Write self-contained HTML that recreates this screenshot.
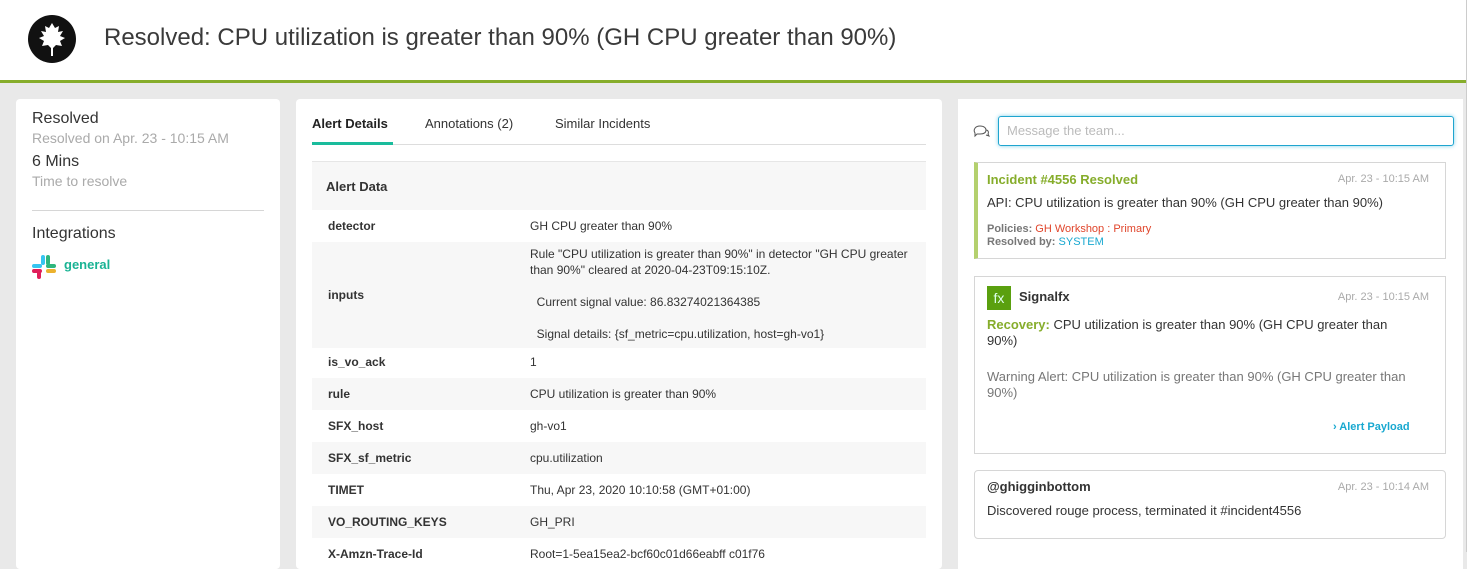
<!DOCTYPE html>
<html><head><meta charset="utf-8"><style>
*{box-sizing:border-box;margin:0;padding:0}
body{width:1467px;height:552px;overflow:hidden;background:#e9e9e9;font-family:"Liberation Sans",sans-serif;color:#333;position:relative}
.hdr{position:absolute;left:0;top:0;width:1467px;height:83px;background:#fff;border-bottom:3px solid #86ad2b}
.logo{position:absolute;left:28px;top:15px;width:48px;height:48px;border-radius:50%;background:#111}
.title{position:absolute;left:104px;top:24px;font-size:24px;color:#3a3a3a}
.panel{position:absolute;background:#fff;border-radius:4px}
.l{left:16px;top:99px;width:264px;height:470px}
.m{left:296px;top:99px;width:646px;height:470px}
.r{left:958px;top:99px;width:505px;height:470px;border-radius:0}
.abs{position:absolute;white-space:nowrap}
.row{position:absolute;left:312px;width:614px;font-size:12px;color:#333}
.row b{position:absolute;left:16px;font-weight:bold;color:#333}
.row span{position:absolute;left:218px}
.g{background:#f7f7f7}
.card{position:absolute;left:974px;width:472px;border:1px solid #d6d6d6;background:#fff}
.ts{position:absolute;right:16px;font-size:11px;color:#aaa}
</style></head><body>
<div class="hdr">
<div class="logo"><svg width="48" height="48" viewBox="0 0 48 48"><path d="M24 8 L27 13 L31 11 L30 17 L35 16 L32 21 L37 23 L32 26 L34 31 L28 30 L25 33 L25 41 L23 41 L23 33 L20 30 L14 31 L16 26 L11 23 L16 21 L13 16 L18 17 L17 11 L21 13 Z" fill="#fff"/></svg></div>
<div class="title">Resolved: CPU utilization is greater than 90% (GH CPU greater than 90%)</div>
</div>
<div style="position:absolute;right:0;top:0;width:1px;height:552px;background:#ccc"></div>

<div class="panel l"></div>
<div class="abs" style="left:32px;top:110px;font-size:16px;color:#333">Resolved</div>
<div class="abs" style="left:32px;top:130px;font-size:14px;color:#aaa">Resolved on Apr. 23 - 10:15 AM</div>
<div class="abs" style="left:32px;top:153px;font-size:16px;color:#333">6 Mins</div>
<div class="abs" style="left:32px;top:173px;font-size:14px;color:#aaa">Time to resolve</div>
<div class="abs" style="left:32px;top:210px;width:232px;height:1px;background:#d6d6d6"></div>
<div class="abs" style="left:32px;top:225px;font-size:16px;color:#333">Integrations</div>
<svg class="abs" style="left:32px;top:255px" width="24" height="24" viewBox="0 0 24 24"><rect x="9" y="0" width="4" height="10" rx="2" fill="#36c5f0"/><rect x="0" y="9" width="10" height="4" rx="2" fill="#36c5f0"/><rect x="14" y="0" width="4" height="10" rx="2" fill="#2eb67d"/><rect x="14" y="9" width="10" height="4" rx="2" fill="#2eb67d"/><rect x="14" y="14" width="10" height="4" rx="2" fill="#ecb22e"/><rect x="0" y="14" width="10" height="4" rx="2" fill="#e01e5a"/><rect x="5" y="14" width="4" height="10" rx="2" fill="#e01e5a"/></svg>
<div class="abs" style="left:64px;top:257px;font-size:13px;color:#1ab394;font-weight:bold">general</div>

<div class="panel m"></div>
<div class="abs" style="left:312px;top:116px;font-size:13px;font-weight:bold;color:#222">Alert Details</div>
<div class="abs" style="left:425px;top:116px;font-size:13px;color:#333">Annotations (2)</div>
<div class="abs" style="left:555px;top:116px;font-size:13px;color:#333">Similar Incidents</div>
<div class="abs" style="left:312px;top:144px;width:614px;height:1px;background:#ddd"></div>
<div class="abs" style="left:312px;top:142px;width:81px;height:3px;background:#1abc9c"></div>
<div class="abs" style="left:312px;top:161px;width:614px;height:1px;background:#e6e6e6"></div>
<div class="row g" style="top:162px;height:48px"><b style="top:17px;left:14px;font-size:13px">Alert Data</b></div>
<div class="row" style="top:210px;height:32px"><b style="top:9px">detector</b><span style="top:9px">GH CPU greater than 90%</span></div>
<div class="row g" style="top:242px;height:106px;line-height:16px"><b style="top:45px">inputs</b><span style="top:4px">Rule "CPU utilization is greater than 90%" in detector "GH CPU greater<br>than 90%" cleared at 2020-04-23T09:15:10Z.<br><br>&nbsp; Current signal value: 86.83274021364385<br><br>&nbsp; Signal details: {sf_metric=cpu.utilization, host=gh-vo1}</span></div>
<div class="row" style="top:348px;height:30px"><b style="top:7px">is_vo_ack</b><span style="top:7px">1</span></div>
<div class="row g" style="top:378px;height:32px"><b style="top:9px">rule</b><span style="top:9px">CPU utilization is greater than 90%</span></div>
<div class="row" style="top:410px;height:32px"><b style="top:9px">SFX_host</b><span style="top:9px">gh-vo1</span></div>
<div class="row g" style="top:442px;height:32px"><b style="top:9px">SFX_sf_metric</b><span style="top:9px">cpu.utilization</span></div>
<div class="row" style="top:474px;height:32px"><b style="top:9px">TIMET</b><span style="top:9px">Thu, Apr 23, 2020 10:10:58 (GMT+01:00)</span></div>
<div class="row g" style="top:506px;height:32px"><b style="top:9px">VO_ROUTING_KEYS</b><span style="top:9px">GH_PRI</span></div>
<div class="row" style="top:538px;height:20px"><b style="top:9px">X-Amzn-Trace-Id</b><span style="top:9px">Root=1-5ea15ea2-bcf60c01d66eabff c01f76</span></div>

<div class="panel r"></div>
<svg class="abs" style="left:973px;top:124px" width="17" height="14" viewBox="0 0 17 14"><path d="M2 9 C0 6 2 2 7 2 C11 2 13 4 13 6 C13 9 10 10 7 10 L4 10 L2 12 Z M13 6 C15 6 16 8 15 10 L16 12 L13 11" fill="none" stroke="#555" stroke-width="1"/></svg>
<div class="abs" style="left:998px;top:116px;width:456px;height:30px;border:1px solid #1fa5cf;border-radius:3px;box-shadow:0 0 4px #7fd0ea;font-size:13px;color:#bbb;padding:6px 8px">Message the team...</div>
<div class="card" style="top:162px;height:97px;border-left:4px solid #b4d06e">
<div class="abs" style="left:9px;top:9px;font-size:13px;font-weight:bold;color:#86ad2b">Incident #4556 Resolved</div>
<div class="ts" style="top:10px">Apr. 23 - 10:15 AM</div>
<div class="abs" style="left:9px;top:32px;font-size:13px;color:#333">API: CPU utilization is greater than 90% (GH CPU greater than 90%)</div>
<div class="abs" style="left:9px;top:60px;font-size:11px;font-weight:bold;color:#777">Policies: <span style="color:#e0452b;font-weight:normal">GH Workshop : Primary</span></div>
<div class="abs" style="left:9px;top:73px;font-size:11px;font-weight:bold;color:#777">Resolved by: <span style="color:#18a8d0;font-weight:normal">SYSTEM</span></div>
</div>
<div class="card" style="top:276px;height:178px">
<div class="abs" style="left:12px;top:9px;width:24px;height:24px;background:#5aa00f;color:#dfe;font-size:14px;text-align:center;line-height:24px">fx</div>
<div class="abs" style="left:44px;top:12px;font-size:13px;font-weight:bold;color:#333">Signalfx</div>
<div class="ts" style="top:14px">Apr. 23 - 10:15 AM</div>
<div class="abs" style="left:12px;top:40px;font-size:13px;line-height:16px;color:#333;white-space:normal;width:428px"><b style="color:#86ad2b">Recovery:</b> CPU utilization is greater than 90% (GH CPU greater than 90%)</div>
<div class="abs" style="left:12px;top:92px;font-size:13px;line-height:16px;color:#777;white-space:normal;width:428px">Warning Alert: CPU utilization is greater than 90% (GH CPU greater than 90%)</div>
<div class="abs" style="left:358px;top:144px;font-size:11px;font-weight:bold;color:#18a8d0">› Alert Payload</div>
</div>
<div class="card" style="top:470px;height:69px;border-radius:4px">
<div class="abs" style="left:12px;top:8px;font-size:13px;font-weight:bold;color:#333">@ghigginbottom</div>
<div class="ts" style="top:10px">Apr. 23 - 10:14 AM</div>
<div class="abs" style="left:12px;top:32px;font-size:13px;color:#333">Discovered rouge process, terminated it #incident4556</div>
</div>
</body></html>
